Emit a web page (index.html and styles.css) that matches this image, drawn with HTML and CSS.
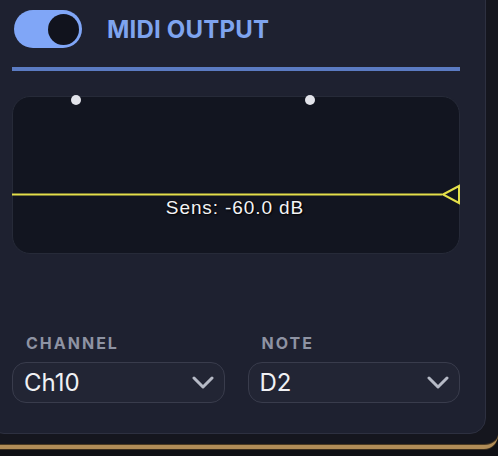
FILE: index.html
```html
<!DOCTYPE html>
<html>
<head>
<meta charset="utf-8">
<link rel="stylesheet" href="styles.css">
</head>
<body>
<div class="frame">
  <div class="panel">
    <div class="header">
      <div class="toggle"><div class="knob"></div></div>
      <div class="title">MIDI OUTPUT</div>
    </div>
    <div class="divider"></div>
    <div class="graph">
      <svg class="graph-svg" width="448" height="158" viewBox="0 0 448 158">
        <line x1="0" y1="98.5" x2="430" y2="98.5" stroke="#e3df4a" stroke-width="2"/>
        <polygon points="431,98.5 447,90 447,107" fill="none" stroke="#e3df4a" stroke-width="2" stroke-linejoin="miter"/>
      </svg>
      <div class="dot dot-a"></div>
      <div class="dot dot-b"></div>
      <div class="sens">Sens: -60.0 dB</div>
    </div>
    <div class="fields">
      <div class="field">
        <div class="label">CHANNEL</div>
        <div class="select"><span>Ch10</span>
          <svg class="chev" width="22" height="14" viewBox="0 0 22 14"><path d="M2 2 L11 11 L20 2" fill="none" stroke="#b6bac6" stroke-width="3" stroke-linecap="round" stroke-linejoin="round"/></svg>
        </div>
      </div>
      <div class="field">
        <div class="label">NOTE</div>
        <div class="select"><span>D2</span>
          <svg class="chev" width="22" height="14" viewBox="0 0 22 14"><path d="M2 2 L11 11 L20 2" fill="none" stroke="#b6bac6" stroke-width="3" stroke-linecap="round" stroke-linejoin="round"/></svg>
        </div>
      </div>
    </div>
  </div>
</div>
</body>
</html>
```
FILE: styles.css
```css
html, body {
  margin: 0;
  padding: 0;
}
body {
  width: 498px;
  height: 456px;
  overflow: hidden;
  background: #0f1015;
  font-family: Inter, "Noto Sans", sans-serif;
}
.frame {
  width: 498px;
  box-sizing: border-box;
  padding: 0 12px 11px 0;
  background: #15161e;
  border-bottom: 4px solid #b08c57;
  border-bottom-right-radius: 14px;
  box-shadow: 0 -1px 0 #4a3a22 inset, 0 1px 0 #3a2d1c;
}
.panel {
  margin: -20px 0 0 -12px;
  box-sizing: border-box;
  background: #1e2130;
  border: 1px solid #2d3040;
  border-radius: 16px;
  padding: 29px 25px 30px 23px;
}
.header {
  display: flex;
  align-items: center;
  gap: 25px;
  height: 38px;
  padding-left: 2px;
}
.toggle {
  width: 68px;
  height: 38px;
  border-radius: 19px;
  background: #80a6f7;
  display: flex;
  align-items: center;
  justify-content: flex-end;
  padding-right: 3px;
  box-sizing: border-box;
}
.knob {
  width: 31px;
  height: 31px;
  border-radius: 50%;
  background: #11131d;
}
.title {
  font-size: 24px;
  font-weight: 700;
  color: #7ea4ef;
  letter-spacing: 0.2px;
}
.divider {
  margin-top: 19px;
  height: 4px;
  background: #5b7bc2;
}
.graph {
  position: relative;
  margin-top: 25px;
  height: 158px;
  box-sizing: border-box;
  background: #121520;
  border: 1px solid #262a38;
  border-radius: 18px;
}
.graph-svg {
  position: absolute;
  left: -1px;
  top: -1px;
}
.dot {
  position: absolute;
  width: 10px;
  height: 10px;
  border-radius: 50%;
  background: #e2e3ea;
  top: -2px;
}
.dot-a { left: 58px; }
.dot-b { left: 292px; }
.sens {
  position: absolute;
  left: 0;
  right: 0;
  top: 100px;
  text-align: center;
  font-family: "Liberation Sans", Arial, sans-serif;
  font-size: 19px;
  letter-spacing: 0.9px;
  color: #f4f4f6;
  text-shadow: 1px 1px 2px #000, 0 0 1px #000;
  padding-right: 2px;
}
.fields {
  display: grid;
  grid-template-columns: 1fr 1fr;
  gap: 23px;
  margin-top: 79px;
}
.label {
  padding-left: 14px;
  font-size: 16px;
  line-height: 20px;
  font-weight: 700;
  letter-spacing: 2px;
  color: #8e93a3;
}
.select {
  margin-top: 9px;
  height: 41px;
  box-sizing: border-box;
  border: 1.5px solid #393c4c;
  border-radius: 14px;
  background: #222534;
  display: flex;
  align-items: center;
  justify-content: space-between;
  padding: 0 10px 0 11px;
  font-size: 24px;
  color: #f0f1f4;
}
.chev {
  display: block;
  margin-top: 1px;
}
```
